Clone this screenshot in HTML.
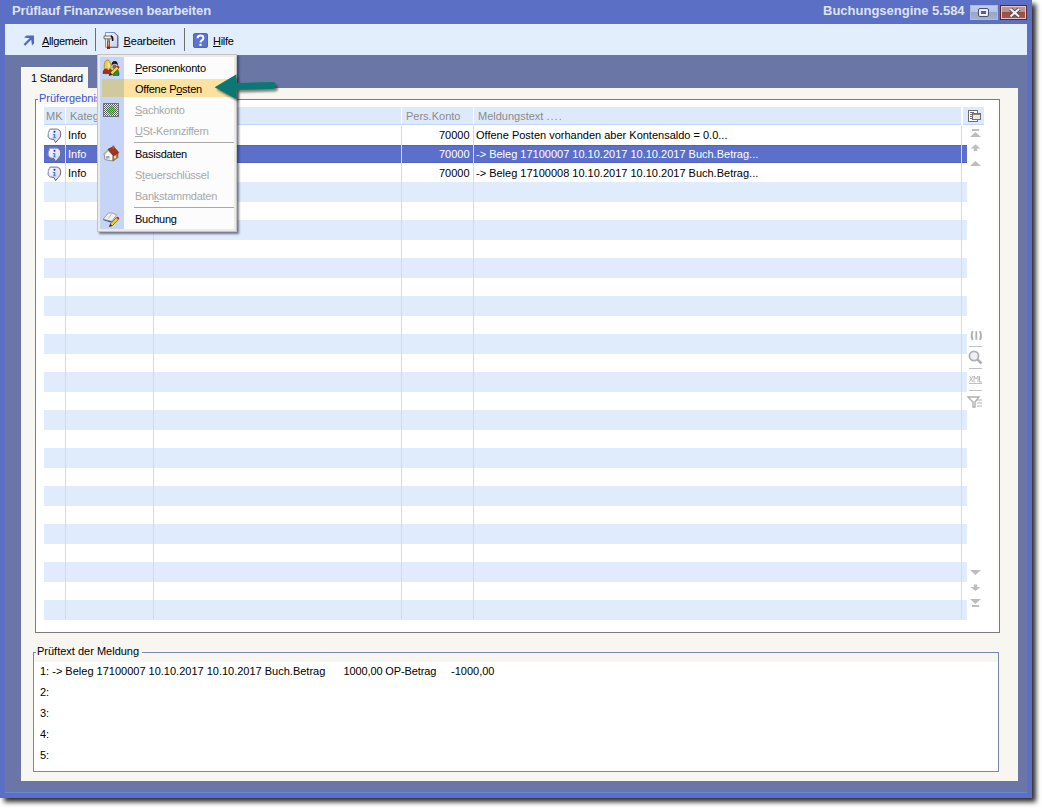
<!DOCTYPE html>
<html><head><meta charset="utf-8">
<style>
*{margin:0;padding:0;box-sizing:border-box}
html,body{width:1042px;height:808px;overflow:hidden;background:#fff;font-family:"Liberation Sans",sans-serif;font-size:11px;color:#000}
.a{position:absolute}
.t{position:absolute;white-space:pre;line-height:13px}
.u{text-decoration:underline;text-underline-offset:1px}
.hd{color:#8a8a8a}
.dis{color:#a8a8a8}
.m{letter-spacing:-0.25px}
</style></head><body>
<!-- window frame -->
<div class="a" style="left:4px;top:4px;width:1032px;height:798px;background:#2e2e2e;filter:blur(2.6px)"></div>
<div class="a" style="left:0;top:0;width:1032px;height:798px;background:#5b70c4"></div>
<div class="t" style="left:12px;top:4px;font-weight:bold;font-size:13px;color:#dde3f3;letter-spacing:-0.13px">Prüflauf Finanzwesen bearbeiten</div>
<div class="t" style="left:823px;top:4px;font-weight:bold;font-size:13px;color:#dde3f3">Buchungsengine 5.584</div>
<!-- restore btn -->
<div class="a" style="left:970px;top:5px;width:28px;height:15px;background:linear-gradient(to bottom,#c0cdea 0,#b4c2e4 50%,#98a6c6 50%,#a4b2d2 100%);border:1px solid #a8b8e0"></div>
<div class="a" style="left:978px;top:8px;width:11px;height:9px;border:1.5px solid #4a5070;border-radius:2px;background:#e8ecf4"></div>
<div class="a" style="left:981px;top:11px;width:5px;height:3px;background:#5a6080"></div>
<!-- close btn -->
<div class="a" style="left:1000px;top:5px;width:27px;height:15px;background:linear-gradient(to bottom,#c09898 0,#b89090 45%,#9c4c42 45%,#a05a50 100%);border:1px solid #5a2a28;border-right-color:#5a3030;box-shadow:inset 0 0 0 1px #e4c4c4"></div>
<svg class="a" style="left:1006px;top:6px" width="16" height="13" viewBox="0 0 16 13"><path d="M4.5,3 L13,10.5 M13,3 L4.5,10.5" stroke="#50505e" stroke-width="4" fill="none"/><path d="M4.5,3 L13,10.5 M13,3 L4.5,10.5" stroke="#f4f4f8" stroke-width="2" fill="none"/></svg>
<!-- toolbar -->
<div class="a" style="left:5px;top:24px;width:1022px;height:31px;background:#e2eefc"></div>
<div class="a" style="left:95px;top:28px;width:1px;height:23px;background:#6e6e6e"></div>
<div class="a" style="left:184px;top:28px;width:1px;height:23px;background:#6e6e6e"></div>
<svg class="a" style="left:22px;top:34px" width="14" height="14" viewBox="0 0 14 14"><path d="M2,3.5 L4.5,1.5 L12,1.5 L12,9.5 L10,11.5 L9.2,5.8 L3.2,11.8 L1.6,10.2 L7.6,4.2 Z" fill="#5068c8"/></svg>
<div class="t" style="left:42px;top:35px;letter-spacing:-0.35px"><span class="u">A</span>llgemein</div>
<svg class="a" style="left:100px;top:28px" width="22" height="22" viewBox="0 0 22 22"><defs><linearGradient id="dg" x1="0" y1="0" x2="1" y2="1"><stop offset="0" stop-color="#ffffff"/><stop offset="1" stop-color="#c8c8f0"/></linearGradient></defs><path d="M5.5,4.5 H14.5 L17.8,7.8 V19.3 H5.5 Z" fill="url(#dg)" stroke="#7890e0" stroke-width="1"/><path d="M14.5,4.5 L17.8,7.8 V19.3 H7" fill="none" stroke="#606060" stroke-width="1"/><path d="M13.5,4.5 H14.5 L17.8,7.8 V8.5 Z" fill="#5a8ae8"/><path d="M4,8 H11.8 V10.8 H4 Z" fill="#f0f0f0" stroke="#505050" stroke-width="0.8"/><path d="M10.8,8 Q13.2,8.6 12.6,13" stroke="#101010" stroke-width="1.6" fill="none"/><rect x="7" y="10.8" width="3" height="2.4" fill="#8a8a8a"/><rect x="7" y="13" width="3" height="7.6" fill="#e23a12"/><rect x="8" y="13.5" width="0.8" height="4" fill="#f8c040"/><rect x="7" y="19.4" width="3" height="1.3" fill="#202020"/></svg>
<div class="t" style="left:123.5px;top:35px;letter-spacing:-0.15px"><span class="u">B</span>earbeiten</div>
<svg class="a" style="left:193px;top:33px" width="15" height="15" viewBox="0 0 15 15"><rect x="0.5" y="0.5" width="14" height="14" rx="1.5" fill="#5a72d0" stroke="#4c64c8"/><path d="M4.6,5.2 Q4.6,2.6 7.5,2.6 Q10.4,2.6 10.4,5 Q10.4,6.6 8.5,7.6 Q7.5,8.2 7.5,9.6" stroke="#fff" stroke-width="2" fill="none"/><rect x="6.4" y="10.8" width="2.2" height="2" fill="#fff"/></svg>
<div class="t" style="left:213px;top:35px;letter-spacing:-0.3px"><span class="u">H</span>ilfe</div>
<!-- dark client area -->
<div class="a" style="left:5px;top:55px;width:1022px;height:737px;background:#6a77a6"></div>
<div class="a" style="left:5px;top:792px;width:1022px;height:1px;background:#6a86d8"></div>
<!-- tab & panel -->
<div class="a" style="left:21px;top:67px;width:67px;height:22px;background:#f7f6f1;border-top:1px solid #fdfdfb;border-left:1px solid #fdfdfb"></div>
<div class="a" style="left:21px;top:88px;width:997px;height:693px;background:#f7f6f1"></div>
<div class="t" style="left:31px;top:72px;letter-spacing:-0.2px">1 Standard</div>
<!-- group 1 -->
<div class="a" style="left:35px;top:99px;width:965px;height:534px;border:1px solid #7c7c7c;background:#fff"></div>
<div class="a" style="left:38px;top:92px;width:70px;height:12px;background:#f7f6f1"></div>
<div class="t" style="left:39px;top:92px;color:#3a55d0">Prüfergebnisse</div>
<!-- header -->
<div class="a" style="left:44px;top:107px;width:21px;height:17px;background:#deeafc"></div>
<div class="a" style="left:66px;top:107px;width:87px;height:17px;background:#deeafc"></div>
<div class="a" style="left:154px;top:107px;width:247px;height:17px;background:#deeafc"></div>
<div class="a" style="left:402px;top:107px;width:71px;height:17px;background:#deeafc"></div>
<div class="a" style="left:474px;top:107px;width:487px;height:17px;background:#deeafc"></div>
<div class="a" style="left:44px;top:124px;width:917px;height:1px;background:#c4d6f6"></div>
<div class="a" style="left:963px;top:107px;width:21px;height:17px;background:#deeafc"></div>
<div class="a" style="left:963px;top:124px;width:21px;height:1px;background:#c4d6f6"></div>
<div class="t hd" style="left:46px;top:110px">MK</div>
<div class="t hd" style="left:70px;top:110px">Kategorie</div>
<div class="t hd" style="left:406px;top:110px">Pers.Konto</div>
<div class="t hd" style="left:478px;top:110px">Meldungstext <span style="letter-spacing:1px">....</span></div>
<svg class="a" style="left:968px;top:110px" width="14" height="13" viewBox="0 0 14 13"><rect x="0.5" y="0.5" width="9" height="11" fill="#fff" stroke="#6e6e6e"/><path d="M2,2.5 H6 M2,4.5 H4 M2,6.5 H4 M2,8.5 H4" stroke="#6e6e6e"/><rect x="4.5" y="3.5" width="8" height="6" fill="#e8e8e2" stroke="#6e6e6e"/><rect x="5" y="4" width="7" height="1" fill="#8a8a8a"/></svg>
<!-- rows -->
<div class="a" style="left:44px;top:145px;width:923px;height:18px;background:#5b6fcb;border-top:1px solid #4e63c4;border-bottom:1px solid #4e63c4"></div>
<div class="a" style="left:44px;top:182px;width:923px;height:20px;background:#e0ebfc"></div>
<div class="a" style="left:44px;top:220px;width:923px;height:20px;background:#e0ebfc"></div>
<div class="a" style="left:44px;top:258px;width:923px;height:20px;background:#e0ebfc"></div>
<div class="a" style="left:44px;top:296px;width:923px;height:20px;background:#e0ebfc"></div>
<div class="a" style="left:44px;top:334px;width:923px;height:20px;background:#e0ebfc"></div>
<div class="a" style="left:44px;top:372px;width:923px;height:20px;background:#e0ebfc"></div>
<div class="a" style="left:44px;top:410px;width:923px;height:20px;background:#e0ebfc"></div>
<div class="a" style="left:44px;top:448px;width:923px;height:20px;background:#e0ebfc"></div>
<div class="a" style="left:44px;top:486px;width:923px;height:20px;background:#e0ebfc"></div>
<div class="a" style="left:44px;top:524px;width:923px;height:20px;background:#e0ebfc"></div>
<div class="a" style="left:44px;top:562px;width:923px;height:20px;background:#e0ebfc"></div>
<div class="a" style="left:44px;top:600px;width:923px;height:20px;background:#e0ebfc"></div>
<div class="a" style="left:65px;top:126px;width:1px;height:493px;background:#c9dafa"></div>
<div class="a" style="left:153px;top:126px;width:1px;height:493px;background:#c9dafa"></div>
<div class="a" style="left:401px;top:126px;width:1px;height:493px;background:#c9dafa"></div>
<div class="a" style="left:473px;top:126px;width:1px;height:493px;background:#c9dafa"></div>
<div class="a" style="left:961px;top:126px;width:1px;height:493px;background:#c9dafa"></div>
<svg class="a" style="left:47px;top:128px" width="15" height="16" viewBox="0 0 15 16"><defs><linearGradient id="bf47128" x1="0" y1="0" x2="1" y2="1"><stop offset="0" stop-color="#ffffff"/><stop offset="1" stop-color="#d0d0f4"/></linearGradient></defs><path d="M3,1.2 H10.5 Q13.8,1.8 13.8,6 Q13.8,9.5 11.5,11.2 L8.6,14.6 L7,11.6 Q2.5,11.5 1.2,9 Q0.8,4 3,1.2 Z" fill="url(#bf47128)" stroke="#6a6a7c" stroke-width="1"/><path d="M1.2,9 Q0.8,4 3,1.2 H10.5" fill="none" stroke="#a8a8e4" stroke-width="1"/><circle cx="7.5" cy="3.7" r="1" fill="#2828a8"/><path d="M5.9,6 H8.3 V9.4 H9.1 V10.3 H5.9 V9.4 H6.7 V6.9 H5.9Z" fill="#3a8ef0"/></svg><svg class="a" style="left:47px;top:147px" width="15" height="16" viewBox="0 0 15 16"><defs><linearGradient id="bf47147" x1="0" y1="0" x2="1" y2="1"><stop offset="0" stop-color="#ffffff"/><stop offset="1" stop-color="#d0d0f4"/></linearGradient></defs><path d="M3,1.2 H10.5 Q13.8,1.8 13.8,6 Q13.8,9.5 11.5,11.2 L8.6,14.6 L7,11.6 Q2.5,11.5 1.2,9 Q0.8,4 3,1.2 Z" fill="url(#bf47147)" stroke="#6a6a7c" stroke-width="1"/><path d="M1.2,9 Q0.8,4 3,1.2 H10.5" fill="none" stroke="#a8a8e4" stroke-width="1"/><circle cx="7.5" cy="3.7" r="1" fill="#2828a8"/><path d="M5.9,6 H8.3 V9.4 H9.1 V10.3 H5.9 V9.4 H6.7 V6.9 H5.9Z" fill="#3a8ef0"/></svg><svg class="a" style="left:47px;top:166px" width="15" height="16" viewBox="0 0 15 16"><defs><linearGradient id="bf47166" x1="0" y1="0" x2="1" y2="1"><stop offset="0" stop-color="#ffffff"/><stop offset="1" stop-color="#d0d0f4"/></linearGradient></defs><path d="M3,1.2 H10.5 Q13.8,1.8 13.8,6 Q13.8,9.5 11.5,11.2 L8.6,14.6 L7,11.6 Q2.5,11.5 1.2,9 Q0.8,4 3,1.2 Z" fill="url(#bf47166)" stroke="#6a6a7c" stroke-width="1"/><path d="M1.2,9 Q0.8,4 3,1.2 H10.5" fill="none" stroke="#a8a8e4" stroke-width="1"/><circle cx="7.5" cy="3.7" r="1" fill="#2828a8"/><path d="M5.9,6 H8.3 V9.4 H9.1 V10.3 H5.9 V9.4 H6.7 V6.9 H5.9Z" fill="#3a8ef0"/></svg>
<div class="t" style="left:68px;top:129px">Info</div>
<div class="t" style="left:68px;top:148px;color:#fff">Info</div>
<div class="t" style="left:68px;top:167px">Info</div>
<div class="t" style="left:439px;top:129px">70000</div>
<div class="t" style="left:439px;top:148px;color:#fff">70000</div>
<div class="t" style="left:439px;top:167px">70000</div>
<div class="t" style="left:476px;top:129px">Offene Posten vorhanden aber Kontensaldo = 0.0...</div>
<div class="t" style="left:476px;top:148px;color:#fff">-&gt; Beleg 17100007 10.10.2017 10.10.2017 Buch.Betrag...</div>
<div class="t" style="left:476px;top:167px">-&gt; Beleg 17100008 10.10.2017 10.10.2017 Buch.Betrag...</div>
<!-- right side icons -->
<svg class="a" style="left:968px;top:126px" width="16" height="44" viewBox="0 0 16 44"><rect x="4" y="3" width="7" height="2" fill="#bdbdbd"/><path d="M2,11 L7.5,6 L13,11Z" fill="#bdbdbd"/><path d="M2.5,22.5 L7.5,18.5 L12.5,22.5 H9.2 V25 H5.8 V22.5Z" fill="#bdbdbd"/><path d="M2,40 L7.5,35 L13,40Z" fill="#bdbdbd"/></svg>
<svg class="a" style="left:966px;top:328px" width="18" height="82" viewBox="0 0 18 82"><path d="M6.6,3 Q4.6,7.5 6.6,12 M10.3,3.2 V11.8 M14,3 Q16,7.5 14,12" stroke="#b0b0b0" stroke-width="1.8" fill="none"/><rect x="3" y="18" width="13" height="1" fill="#c0c0c0"/><circle cx="8" cy="28" r="4.6" fill="#eeeefa" stroke="#b0b0b0" stroke-width="1.8"/><path d="M11.2,31.2 L15.5,35.5" stroke="#b0b0b0" stroke-width="2.6"/><rect x="3" y="40" width="13" height="1" fill="#c0c0c0"/><path d="M3.5,48 L7,54 M7,48 L3.5,54 M8,54 V48 L10,51 L12,48 V54 M13.5,48 V54 H16" stroke="#b8b8b8" stroke-width="1" fill="none"/><rect x="3" y="55" width="13" height="1" fill="#c0c0c0"/><rect x="3" y="62" width="13" height="1" fill="#c0c0c0"/><path d="M2,69 H13 L9,74 V79 H7 V74 Z" fill="none" stroke="#b0b0b0" stroke-width="1.4"/><path d="M11,72 H16 M11,75 H16 M11,78 H16" stroke="#b0b0b0" stroke-width="1"/></svg>
<svg class="a" style="left:968px;top:566px" width="16" height="44" viewBox="0 0 16 44"><path d="M2,4 L7.5,9 L13,4Z" fill="#bdbdbd"/><path d="M5.8,18.5 H9.2 V21 H12.5 L7.5,25 L2.5,21 H5.8Z" fill="#bdbdbd"/><path d="M2,33 L7.5,38 L13,33Z" fill="#bdbdbd"/><rect x="4" y="39" width="7" height="2" fill="#bdbdbd"/></svg>
<!-- popup menu -->
<div class="a" style="left:97px;top:54px;width:140px;height:178px;background:#ebeae8;border:1px solid #c2c2c2;box-shadow:2px 2px 2px rgba(40,40,60,0.6)"></div>
<div class="a" style="left:100px;top:57px;width:134px;height:172px;background:#fcfcfc"></div>
<div class="a" style="left:100px;top:57px;width:24px;height:172px;background:#c6d5f7"></div>
<div class="a" style="left:102px;top:79px;width:134px;height:18px;background:#fbe2a0"></div>
<div class="a" style="left:102px;top:79px;width:22px;height:18px;background:#cfc99c"></div>
<div class="a" style="left:134px;top:142px;width:100px;height:1px;background:#a8a8a8"></div>
<div class="a" style="left:134px;top:207px;width:100px;height:1px;background:#a8a8a8"></div>
<div class="t m" style="left:135px;top:62px"><span class="u">P</span>ersonenkonto</div>
<div class="t m" style="left:135px;top:83px">Offene P<span class="u">o</span>sten</div>
<div class="t m dis" style="left:135px;top:104px"><span class="u">S</span>achkonto</div>
<div class="t m dis" style="left:135px;top:125px"><span class="u">U</span>St-Kennziffern</div>
<div class="t m" style="left:135px;top:148px">Basisdaten</div>
<div class="t m dis" style="left:135px;top:169px">S<span class="u">t</span>euerschlüssel</div>
<div class="t m dis" style="left:135px;top:190px">Ban<span class="u">k</span>stammdaten</div>
<div class="t m" style="left:135px;top:213px">Buchung</div>
<svg class="a" style="left:100px;top:56px" width="22" height="22" viewBox="0 0 22 22"><path d="M3,17.5 Q3,12.5 7,12.5 H9 Q11.5,12.5 11.8,15 L11,17.8 Z" fill="#a82a20" stroke="#6a1a10" stroke-width="0.6"/><path d="M4.2,12.8 Q3.8,4 7.5,4 Q11.2,4 11,12.8 Z" fill="#e8d040" stroke="#8a7a20" stroke-width="0.6"/><path d="M7.5,6.5 Q10.5,6.5 10.3,10 Q10,12 8.6,12.2 Q7.5,11 7.5,6.5Z" fill="#f6dca8"/><rect x="7.6" y="12.4" width="1.6" height="1.2" fill="#f4f0e0"/><path d="M12.5,12.5 Q12,8.5 14.5,8.5 Q17,8.5 16.8,12.5Z" fill="#9a6030"/><path d="M11.5,9.8 Q11.3,5 14.8,5 Q18,5 17.8,9.5 L16.6,8.3 Q14.5,7 12.6,8.6 Z" fill="#1a1a1a"/><path d="M13,19.5 Q12.5,13 16,13 Q19.2,13 19,19.5Z" fill="#2a8a48" stroke="#1a5a2a" stroke-width="0.6"/><path d="M9.2,19.6 L10.2,16.6 L16.6,10.4 L18.8,12.4 L12.4,18.6 Z" fill="#f0d820" stroke="#5a5000" stroke-width="0.7"/><path d="M16.6,10.4 L17.6,9.6 Q19.2,9.6 19.4,11.6 L18.8,12.4Z" fill="#c02020"/><path d="M9.2,19.6 L10.2,16.6 L12.4,18.6Z" fill="#202020"/></svg>
<svg class="a" style="left:100px;top:100px" width="22" height="22" viewBox="0 0 22 22"><defs><pattern id="chk" x="0" y="0" width="2" height="2" patternUnits="userSpaceOnUse"><rect width="2" height="2" fill="#e8ecf2"/><rect width="1" height="1" fill="#5a5e62"/><rect x="1" y="1" width="1" height="1" fill="#5a5e62"/></pattern><pattern id="chg" x="0" y="0" width="2" height="2" patternUnits="userSpaceOnUse"><rect width="2" height="2" fill="#88d070"/><rect width="1" height="1" fill="#3a8a2a"/><rect x="1" y="1" width="1" height="1" fill="#5a6a5a"/></pattern></defs><rect x="3" y="3" width="16" height="14" fill="url(#chk)"/><rect x="3.5" y="3.5" width="15" height="13" fill="none" stroke="#707478" stroke-width="1"/><path d="M11.5,4.8 L16.6,10 L11.5,15.2 L6.4,10Z" fill="url(#chg)"/></svg>
<svg class="a" style="left:100px;top:142px" width="22" height="22" viewBox="0 0 22 22"><path d="M4.2,12.5 L8,8.2 L13,13.5 L13,19 L5,17.6 Z" fill="#f6f6f8" stroke="#707070" stroke-width="0.7"/><path d="M13,13.5 L18,11 L18,15.5 L13,19Z" fill="#a88040" stroke="#6a5020" stroke-width="0.6"/><path d="M3,12 L8,7.2 L8.8,8.3 L4,12.8Z" fill="#c8a868"/><path d="M8,7.3 L13.5,4.4 L18.8,10.5 L13.4,13.6 Z" fill="#a8341c" stroke="#6a1a0a" stroke-width="0.6"/><rect x="12.6" y="3.6" width="1.8" height="3" fill="#9a6a3a"/><path d="M6,14 H9.5 V16.5 H6Z" fill="#a0aab8"/><rect x="14.2" y="13.8" width="1.6" height="2.6" fill="#f0f0e0"/></svg>
<svg class="a" style="left:100px;top:208px" width="22" height="22" viewBox="0 0 22 22"><path d="M3,12 L10.5,14.6 L12.5,13.5 L4,10.8Z" fill="#2a5aa0"/><path d="M3.2,11 L8.4,5 H12.2 L16.6,6.8 L11.8,13.2 Q7.5,12.5 3.2,11Z" fill="#f0f0f2" stroke="#888" stroke-width="0.7"/><path d="M8,10.8 L11.5,6" stroke="#b0b0b4" stroke-width="0.8"/><path d="M9.4,18.6 L10.4,15.8 L16.4,9.6 L18.4,11.6 L12.2,17.8 Z" fill="#f0d020" stroke="#5a5000" stroke-width="0.7"/><path d="M16.4,9.6 L17.2,8.8 Q19,8.8 19.2,10.8 L18.4,11.6Z" fill="#c02020"/><path d="M9.4,18.6 L10.4,15.8 L12.2,17.8Z" fill="#303030"/></svg>
<!-- green arrow -->
<svg class="a" style="left:210px;top:70px" width="76" height="36" viewBox="0 0 76 36"><g transform="translate(2,2.5)" opacity="0.55" style="filter:blur(1.2px)"><path d="M4.6,17.3 L26.5,4.2 L26.5,13 L62.5,12 A3.5,3.5 0 0 1 62.5,19 L26.5,20 L26.5,29.2 Z" fill="#202020"/></g><path d="M4.6,17.3 L26.5,4.2 L26.5,13 L62.5,12 A3.5,3.5 0 0 1 62.5,19 L26.5,20 L26.5,29.2 Z" fill="#0b7873"/></svg>
<!-- group 2 -->
<div class="a" style="left:33px;top:652px;width:966px;height:120px;border:1px solid #7886b4;background:#fff"></div>
<div class="a" style="left:34px;top:653px;width:964px;height:9px;background:#f7f6f1"></div>
<div class="a" style="left:36px;top:644px;width:106px;height:14px;background:#f7f6f1"></div>
<div class="t" style="left:37px;top:645px">Prüftext der Meldung</div>
<div class="t" style="left:40px;top:665px">1: -&gt; Beleg 17100007 10.10.2017 10.10.2017 Buch.Betrag</div>
<div class="t" style="left:343.5px;top:665px;letter-spacing:-0.12px">1000,00 OP-Betrag</div>
<div class="t" style="left:451px;top:665px">-1000,00</div>
<div class="t" style="left:40px;top:686px">2:</div>
<div class="t" style="left:40px;top:707px">3:</div>
<div class="t" style="left:40px;top:728px">4:</div>
<div class="t" style="left:40px;top:749px">5:</div>
</body></html>
